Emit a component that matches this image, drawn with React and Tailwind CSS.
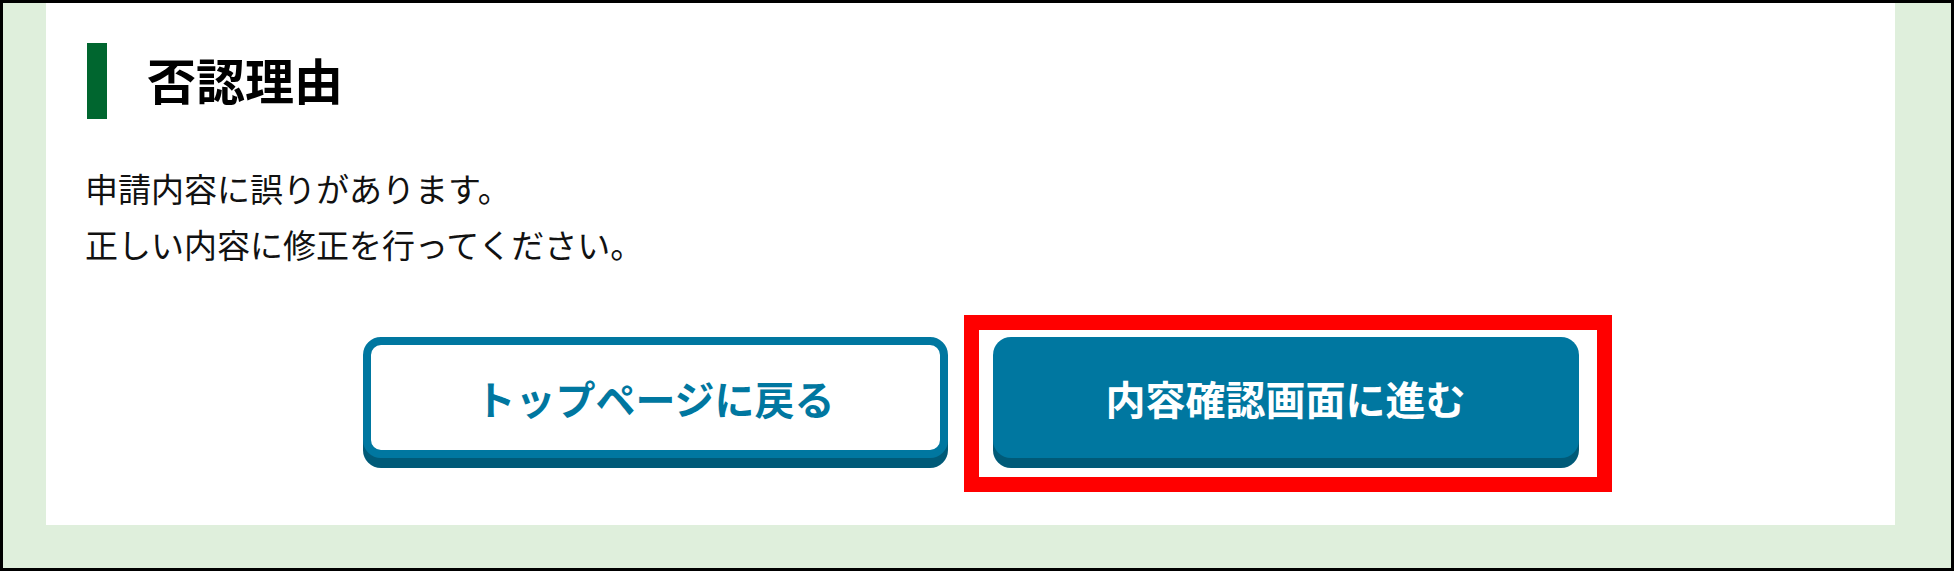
import React from 'react';

const jp = { fontFamily: '"Noto Sans CJK JP", "Noto Sans", sans-serif' };

const App = () => {
  return (
    <div className="w-[1954px] h-[580px] bg-white" style={jp}>
      <div className="w-[1954px] h-[571px] border-[3px] border-black bg-[#dfefdc]">
        <div className="ml-[43px] mr-[56px] h-[522px] bg-white pl-[41px] pt-[40px]">
          {/* heading */}
          <div className="flex items-center gap-[40px]">
            <div className="w-[20px] h-[76px] bg-[#00662f]" />
            <h1 className="text-[49px] font-bold leading-none text-black -mt-[6px]">否認理由</h1>
          </div>

          {/* reason */}
          <div className="mt-[41px] -ml-[2px] text-[33px] leading-[56px] text-[#111]">
            <p>申請内容に誤りがあります。</p>
            <p>正しい内容に修正を行ってください。</p>
          </div>

          {/* actions */}
          <div className="mt-[65px] -ml-[41px] flex justify-center gap-[45px]">
            <button className="w-[585px] h-[121px] rounded-[18px] border-[8px] border-[#0077a0] bg-white shadow-[0_10px_0_#005a78] text-[40px] font-bold text-[#0077a0] leading-none">
              トップページに戻る
            </button>
            <div className="relative">
              <button className="w-[586px] h-[121px] rounded-[18px] bg-[#0077a0] shadow-[0_10px_0_#005a78] text-[40px] font-bold text-white leading-none">
                内容確認画面に進む
              </button>
              <div className="absolute -top-[22px] -left-[29px] -right-[33px] -bottom-[34px] border-[15px] border-[#ff0000] pointer-events-none" />
            </div>
          </div>
        </div>
      </div>
    </div>
  );
};

export default App;
